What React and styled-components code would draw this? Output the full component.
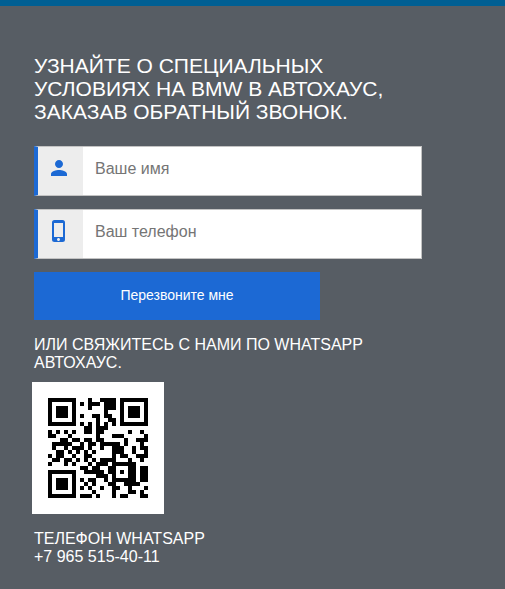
import React, { useState } from 'react'
import styled, { createGlobalStyle } from 'styled-components'
import { MdPerson, MdPhoneIphone } from 'react-icons/md'

// version 2 QR code, error correction M, mask 0
const SIZE = 25
const DATA_WORDS = 28
const EC_WORDS = 16
const FORMAT_BITS = '101010000010010'

const multiply = (a, b) => {
    let result = 0
    for (; b; b >>= 1) {
        if (b & 1) result ^= a
        a <<= 1
        if (a & 256) a ^= 0x11d
    }
    return result
}

const makeCodewords = (text) => {
    const bits = []
    const push = (value, length) => {
        for (let i = length - 1; i >= 0; i--) bits.push((value >> i) & 1)
    }
    push(4, 4)
    push(text.length, 8)
    for (const ch of text) push(ch.charCodeAt(0), 8)
    push(0, 4)

    const data = []
    for (let i = 0; i < bits.length; i += 8) {
        data.push(parseInt(bits.slice(i, i + 8).join(''), 2))
    }
    for (let pad = 0xec; data.length < DATA_WORDS; pad ^= 0xfd) data.push(pad)

    let generator = [1]
    let root = 1
    for (let i = 0; i < EC_WORDS; i++) {
        const next = [...generator, 0]
        generator.forEach((g, j) => {
            next[j + 1] ^= multiply(g, root)
        })
        generator = next
        root = multiply(root, 2)
    }

    const rest = [...data, ...Array(EC_WORDS).fill(0)]
    for (let i = 0; i < DATA_WORDS; i++) {
        const factor = rest[i]
        generator.forEach((g, j) => {
            rest[i + j] ^= multiply(g, factor)
        })
    }
    return [...data, ...rest.slice(DATA_WORDS)]
}

const makeQr = (text) => {
    const grid = Array.from({ length: SIZE }, () => Array(SIZE).fill(null))

    const drawFinder = (top, left) => {
        for (let r = -1; r < 8; r++) {
            for (let c = -1; c < 8; c++) {
                if (grid[top + r]?.[left + c] === undefined) continue
                const d = Math.max(Math.abs(r - 3), Math.abs(c - 3))
                grid[top + r][left + c] = d === 3 || d < 2 ? 1 : 0
            }
        }
    }
    drawFinder(0, 0)
    drawFinder(0, SIZE - 7)
    drawFinder(SIZE - 7, 0)

    for (let r = -2; r < 3; r++) {
        for (let c = -2; c < 3; c++) {
            grid[18 + r][18 + c] = Math.max(Math.abs(r), Math.abs(c)) === 1 ? 0 : 1
        }
    }

    for (let i = 8; i < SIZE - 8; i++) {
        grid[6][i] = (i + 1) % 2
        grid[i][6] = (i + 1) % 2
    }

    for (let i = 0; i < 15; i++) {
        const bit = Number(FORMAT_BITS[14 - i])
        if (i < 6) grid[i][8] = bit
        else if (i < 8) grid[i + 1][8] = bit
        else grid[SIZE - 15 + i][8] = bit

        if (i < 8) grid[8][SIZE - 1 - i] = bit
        else if (i === 8) grid[8][7] = bit
        else grid[8][14 - i] = bit
    }
    grid[SIZE - 8][8] = 1

    const bits = makeCodewords(text).flatMap((word) => [...word.toString(2).padStart(8, '0')].map(Number))
    let n = 0
    let up = true
    for (let right = SIZE - 1; right > 0; right -= 2) {
        if (right === 6) right = 5
        for (let i = 0; i < SIZE; i++) {
            const r = up ? SIZE - 1 - i : i
            for (const c of [right, right - 1]) {
                if (grid[r][c] !== null) continue
                const mask = (r + c) % 2 === 0 ? 1 : 0
                grid[r][c] = (bits[n++] || 0) ^ mask
            }
        }
        up = !up
    }
    return grid
}

const qrPath = makeQr('https://chat2desk.com/')
    .flatMap((row, r) => row.map((on, c) => (on ? `M${c} ${r}h1v1h-1z` : '')))
    .join('')

const fields = [
    { id: 'name', type: 'text', label: 'Ваше имя', Icon: MdPerson },
    { id: 'phone', type: 'tel', label: 'Ваш телефон', Icon: MdPhoneIphone },
]

function App() {
    const [values, setValues] = useState({ name: '', phone: '' })

    const handleChange = (e) => {
        setValues({ ...values, [e.target.name]: e.target.value })
    }
    const handleSubmit = (e) => {
        e.preventDefault()
    }

    return (
        <>
            <GlobalStyle />
            <Section>
                <Block>
                    <Title>Узнайте о специальных условиях на BMW в Автохаус, заказав обратный звонок.</Title>
                    <Form onSubmit={handleSubmit}>
                        {fields.map(({ id, type, label, Icon }) => (
                            <Field key={id}>
                                <FieldIcon htmlFor={id} aria-label={label}>
                                    <Icon size={24} />
                                </FieldIcon>
                                <Input
                                    id={id}
                                    name={id}
                                    type={type}
                                    placeholder={label}
                                    value={values[id]}
                                    onChange={handleChange}
                                />
                            </Field>
                        ))}
                        <Button type="submit">Перезвоните мне</Button>
                    </Form>
                    <Text>Или свяжитесь с нами по WhatsApp Автохаус.</Text>
                </Block>
                <QrCode viewBox="-4 -4 33 33" shapeRendering="crispEdges" role="img" aria-label="WhatsApp">
                    <path d={qrPath} />
                </QrCode>
                <Block>
                    <Text>
                        Телефон WhatsApp
                        <br />
                        +7 965 515-40-11
                    </Text>
                </Block>
            </Section>
        </>
    )
}

export default App

const GlobalStyle = createGlobalStyle`
    * {
        box-sizing: border-box;
    }
    body {
        margin: 0;
        background: #575d64;
        color: #fff;
        font-family: "Liberation Sans", Arial, sans-serif;
    }
`

const Section = styled.section`
    display: flex;
    flex-direction: column;
    align-items: flex-start;
    padding: 48px 32px 22px;
    border-top: 6px solid #005f93;
`

const Block = styled.div`
    width: 100%;
    max-width: 392px;
    padding: 0 2px;
`

const Title = styled.h1`
    margin: 0 0 23px;
    font-size: 21px;
    line-height: 23px;
    font-weight: 400;
    text-transform: uppercase;
`

const Form = styled.form`
    display: flex;
    flex-direction: column;
    gap: 13px;
    margin-bottom: 16px;
`

const Field = styled.div`
    display: flex;
    height: 50px;
    border: 1px solid #c3c3c3;
    border-left: 4px solid #1c69d4;
    background: #fff;
`

const FieldIcon = styled.label`
    display: flex;
    align-items: center;
    justify-content: center;
    flex-shrink: 0;
    width: 45px;
    padding: 0 4px 6px 0;
    background: #ededed;
    color: #1c69d4;
`

const Input = styled.input`
    flex: 1;
    min-width: 0;
    padding: 0 12px 4px;
    border: 0;
    outline: 0;
    background: transparent;
    color: #333;
    font-family: inherit;
    font-size: 16px;

    &::placeholder {
        color: #757575;
        opacity: 1;
    }
`

const Button = styled.button`
    width: 100%;
    max-width: 286px;
    height: 48px;
    padding: 0 0 2px;
    border: 0;
    background: #1c69d4;
    color: #fff;
    font-family: inherit;
    font-size: 14px;
    cursor: pointer;

    &:hover {
        background: #1759b5;
    }
`

const Text = styled.p`
    margin: 0;
    font-size: 16px;
    line-height: 18px;
    text-transform: uppercase;
`

const QrCode = styled.svg`
    display: block;
    width: 132px;
    height: 132px;
    margin: 10px 0 16px;
    background: #fff;
`
